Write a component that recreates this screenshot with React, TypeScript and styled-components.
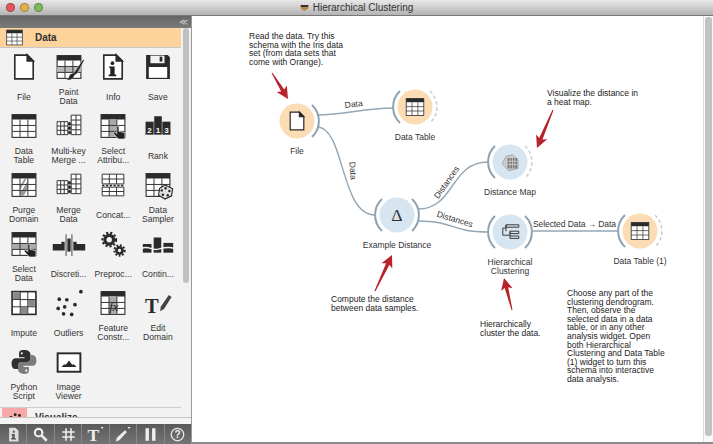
import React from "react";
import styled, { createGlobalStyle } from "styled-components";

const GlobalStyle = createGlobalStyle`
  html, body { margin: 0; padding: 0; background: #fff; }
  body { font-family: "Liberation Sans", Arial, sans-serif; color: #222; }
`;

// icons, all drawn on a 24x24 box
const Doc = () => (
  <g fill="#fff" stroke="#2a2a2a" strokeWidth="1.5">
    <path d="M3.5 1h11.500l5.500 5.500V23h-17z" />
    <path d="M15 1v5.500h5.500z" fill="#2a2a2a" />
  </g>
);

const Table = ({ children }: { children?: React.ReactNode }) => (
  <g>
    <rect x="1" y="1.5" width="22" height="21" fill="#fff" stroke="#2a2a2a" />
    <rect x="1" y="1.5" width="22" height="4.5" fill="#2a2a2a" />
    {children}
    <path d="M1 11.500h22M1 17h22M8.300 6v16M15.600 6v16" stroke="#333" strokeWidth="0.9" fill="none" />
  </g>
);

const Hand = ({ x = 14, y = 12 }: { x?: number; y?: number }) => (
  <path
    transform={`translate(${x} ${y})`}
    d="M1.500 0h2v5l5.500 1v6H3L-2 6.500l1.500-1L1.500 7z"
    fill="#222"
    stroke="#f2f2f2"
    strokeWidth="0.6"
  />
);

const icons: Record<string, React.ReactNode> = {
  file: <Doc />,
  paint: (
    <>
      <Table>
        <rect x="1" y="11.500" width="22" height="5.500" fill="#b9b9b9" />
      </Table>
      <path d="M25 5l1 1-6.500 12-2.500 1.500C16 23 13 24.500 9.500 24c2.500-1 2-3.500 4-5.500l3-1z" fill="#222" stroke="#f2f2f2" strokeWidth="0.4" />
    </>
  ),
  info: (
    <>
      <Doc />
      <circle cx="11.500" cy="8.500" r="1.700" fill="#222" />
      <path d="M8.500 11.500h5v7.500h1.500v1.500H8V19h1.500v-6h-1z" fill="#222" />
    </>
  ),
  save: (
    <>
      <path d="M1 1h20l2 2v20H1z" fill="#2a2a2a" />
      <rect x="5" y="1.500" width="13" height="7" fill="#f2f2f2" />
      <rect x="13.500" y="2.500" width="2.500" height="4.500" fill="#2a2a2a" />
      <rect x="3.500" y="12" width="17" height="10" fill="#fff" />
    </>
  ),
  table: <Table />,
  merge: (
    <g fill="#fff" stroke="#333" strokeWidth="0.9">
      <path d="M1 8h10v12H1zM1 12h10M1 16h10M4.300 8v12M7.600 8v12" />
      <path d="M14 2h9v18h-9zM14 6.500h9M14 11h9M14 15.500h9M18.500 2v18" />
      <circle cx="12.500" cy="10" r="1.200" fill="#222" />
      <circle cx="12.500" cy="14" r="1.200" fill="#222" />
      <circle cx="12.500" cy="18" r="1.200" fill="#222" />
    </g>
  ),
  select: (
    <>
      <Table>
        <rect x="8.300" y="6" width="7.300" height="16" fill="#aaa" />
      </Table>
      <Hand />
    </>
  ),
  rank: (
    <g transform="translate(0 -3)">
      <rect x="0.500" y="11" width="7.500" height="12" fill="#2a2a2a" />
      <rect x="8.500" y="6" width="7" height="17" fill="#2a2a2a" />
      <rect x="16" y="11" width="7.500" height="12" fill="#2a2a2a" />
      <text x="4.200" y="21" fontSize="7.500" fontWeight="700" fill="#fff" textAnchor="middle">2</text>
      <text x="12" y="21" fontSize="7.500" fontWeight="700" fill="#fff" textAnchor="middle">1</text>
      <text x="19.800" y="21" fontSize="7.500" fontWeight="700" fill="#fff" textAnchor="middle">3</text>
    </g>
  ),
  purge: (
    <Table>
      <path d="M8.300 22h3.500l3.800-7V6h-3L8.300 13z" fill="#999" />
      <path d="M9 17l6-10" stroke="#fff" strokeWidth="1.800" />
    </Table>
  ),
  concat: (
    <g fill="#fff" stroke="#333" strokeWidth="0.9">
      <path d="M2 2h20v9H2zM2 6.500h20M8.600 2v9M15.300 2v9" />
      <path d="M2 14h20v8H2zM2 18h20M8.600 14v8M15.300 14v8" />
      <path d="M2 12.500h20" stroke="#222" strokeWidth="1.500" strokeDasharray="2 1.500" />
    </g>
  ),
  sampler: (
    <>
      <Table />
      <path d="M18.500 12l7 3.500-1 6.500-6 3-6-3.500 1-6.500z" fill="#e2e2e2" stroke="#222" />
      <circle cx="15.500" cy="17" r="1.100" fill="#222" />
      <circle cx="19" cy="15" r="1.100" fill="#222" />
      <circle cx="22.500" cy="17.500" r="1.100" fill="#222" />
      <circle cx="16.500" cy="21" r="1.100" fill="#222" />
      <circle cx="21" cy="21.500" r="1.100" fill="#222" />
    </>
  ),
  selectData: (
    <>
      <Table>
        <rect x="1" y="11.500" width="22" height="5.500" fill="#aaa" />
      </Table>
      <Hand />
    </>
  ),
  discrete: (
    <g fill="#2a2a2a">
      <path d="M-3 12h8v-2h3v8H-3zM27 12h-8v-2h-3v8h11z" />
      <rect x="10.500" y="7" width="3" height="12" />
      <path d="M9.300 3v20M14.700 3v20" stroke="#2a2a2a" strokeWidth="0.8" />
    </g>
  ),
  gears: (
    <g fill="none" stroke="#2a2a2a">
      <circle cx="8.500" cy="8" r="4" strokeWidth="3" />
      <circle cx="8.500" cy="8" r="6.300" strokeWidth="2" strokeDasharray="2 1.800" />
      <circle cx="18" cy="18" r="2.800" strokeWidth="2.500" />
      <circle cx="18" cy="18" r="4.800" strokeWidth="1.800" strokeDasharray="1.700 1.500" />
    </g>
  ),
  continuize: (
    <g>
      <rect x="-2" y="12" width="8" height="8" fill="#2a2a2a" />
      <rect x="8" y="6" width="7" height="14" fill="#2a2a2a" />
      <rect x="17" y="11" width="9" height="9" fill="#2a2a2a" />
      <path d="M-3 16c6-3 9 2 14 1s9-3 16-1" stroke="#f2f2f2" strokeWidth="1.300" fill="none" />
    </g>
  ),
  impute: (
    <g>
      <rect x="1" y="1.500" width="22" height="21" fill="#fff" stroke="#2a2a2a" strokeWidth="1.500" />
      <rect x="2" y="2.500" width="6.500" height="6" fill="#888" />
      <rect x="16" y="9" width="6" height="6" fill="#888" />
      <rect x="9" y="16" width="6" height="6" fill="#888" />
      <path d="M1 8.800h22M1 15.500h22M8.500 1.500v21M15.500 1.500v21" stroke="#333" strokeWidth="0.9" />
    </g>
  ),
  outliers: (
    <g fill="#2a2a2a">
      {[[23, 1.5], [3, 8.5], [10, 9], [17.5, 13.5], [8, 15.5], [2, 17], [7, 22], [14.5, 22.5]].map(([cx, cy]) => (
        <circle key={`${cx}-${cy}`} cx={cx} cy={cy} r="1.700" />
      ))}
    </g>
  ),
  feature: (
    <Table>
      <rect x="8.300" y="6" width="7.300" height="16" fill="#aaa" />
      <text x="8.500" y="19" fontSize="12" fontStyle="italic" fontFamily="Liberation Serif" fill="#222">fx</text>
    </Table>
  ),
  edit: (
    <g>
      <text x="0" y="21" fontSize="19" fontWeight="700" fontFamily="Liberation Serif" fill="#2a2a2a">T</text>
      <path d="M22 4.500l2.500 2-7 11-3.500 2 .5-4z" fill="#444" />
    </g>
  ),
  python: (
    <g>
      <path d="M12 1C7 1 7.500 3 7.500 5.500V7.500h5v1H4.500C2 8.500 .5 10.500 .5 13.500s1.500 5 3.500 5H6.500v-3c0-2 1.500-3.500 3.500-3.500h5c1.700 0 3-1.300 3-3V5c0-2-2-4-6-4z" fill="#2f2f2f" />
      <circle cx="10" cy="4" r="1" fill="#f2f2f2" />
      <path d="M12 23c5 0 4.500-2 4.500-4.500V16.500h-5v-1h8c2.500 0 4-2 4-5s-1.500-5-3.500-5H18v3c0 2-1.500 3.500-3.500 3.500h-5c-1.700 0-3 1.300-3 3V19c0 2 2 4 5.500 4z" fill="#7c7c7c" />
      <circle cx="14" cy="20" r="1" fill="#f2f2f2" />
    </g>
  ),
  image: (
    <g>
      <rect x="1.500" y="4" width="21" height="17" fill="#fff" stroke="#2a2a2a" strokeWidth="1.800" />
      <path d="M5 16.500l2.500-2.500 1.500.5 3-4 3 4 1.500-.5 2.500 2.500z" fill="#2a2a2a" />
    </g>
  ),
};

const widgets: [string, string[]][] = [
  ["file", ["File"]],
  ["paint", ["Paint", "Data"]],
  ["info", ["Info"]],
  ["save", ["Save"]],
  ["table", ["Data", "Table"]],
  ["merge", ["Multi-key", "Merge ..."]],
  ["select", ["Select", "Attribu..."]],
  ["rank", ["Rank"]],
  ["purge", ["Purge", "Domain"]],
  ["merge", ["Merge", "Data"]],
  ["concat", ["Concat..."]],
  ["sampler", ["Data", "Sampler"]],
  ["selectData", ["Select", "Data"]],
  ["discrete", ["Discreti..."]],
  ["gears", ["Preproc..."]],
  ["continuize", ["Contin..."]],
  ["impute", ["Impute"]],
  ["outliers", ["Outliers"]],
  ["feature", ["Feature", "Constr..."]],
  ["edit", ["Edit", "Domain"]],
  ["python", ["Python", "Script"]],
  ["image", ["Image", "Viewer"]],
];

const Window = styled.div`
  width: 713px;
  height: 444px;
  overflow: hidden;
  display: flex;
  flex-direction: column;
  background: #fff;
`;

const TitleBar = styled.div`
  height: 15px;
  flex: none;
  position: relative;
  display: flex;
  align-items: center;
  justify-content: center;
  gap: 4px;
  background: linear-gradient(#e8e8e8, #b4b4b4);
  border-bottom: 1px solid #777;
  font-size: 10px;
  color: #333;
`;

const Lights = styled.div`
  position: absolute;
  left: 6px;
  top: 3px;
  display: flex;
  gap: 5px;
`;

const Light = styled.span<{ $color: string }>`
  width: 9px;
  height: 9px;
  border-radius: 50%;
  background: ${(p) => p.$color};
  box-shadow: inset 0 0 0 1px rgba(0, 0, 0, 0.25);
`;

const Body = styled.div`
  flex: 1;
  min-height: 0;
  display: flex;
`;

const Dock = styled.div`
  width: 191px;
  flex: none;
  display: flex;
  flex-direction: column;
  background: #f2f2f2;
  border-right: 1px solid #999;
`;

const DockHeader = styled.div`
  height: 12px;
  flex: none;
  display: flex;
  align-items: center;
  justify-content: flex-end;
  padding-right: 3px;
  background: linear-gradient(#666, #7a7a7a);
  color: #ccc;
  font-size: 9px;
  line-height: 1;
`;

const ToolBox = styled.div`
  flex: 1;
  min-height: 0;
  display: flex;
  overflow: hidden;
`;

const Categories = styled.div`
  width: 181px;
  flex: none;
  overflow: hidden;
`;

const Category = styled.div<{ $bg: string }>`
  height: 20px;
  box-sizing: border-box;
  display: flex;
  align-items: center;
  padding-left: 2px;
  background: ${(p) => p.$bg};
  border-bottom: 1px solid #c8c8c8;
  font-size: 10px;
  font-weight: 700;
  color: #333;
`;

const CategoryTile = styled.div<{ $bg: string }>`
  width: 25px;
  height: 100%;
  margin-right: 8px;
  display: flex;
  align-items: center;
  justify-content: center;
  background: ${(p) => p.$bg};
`;

const CategoryIcon = styled.svg`
  width: 17px;
  height: 17px;
`;

const Grid = styled.div`
  display: grid;
  grid-template-columns: repeat(4, 44.7px);
  grid-auto-rows: 59px;
  height: 360px;
  padding: 6px 0 0 1.5px;
  box-sizing: border-box;
  border-bottom: 1px solid #ccc;
`;

const Widget = styled.div`
  display: flex;
  flex-direction: column;
  align-items: center;
`;

const WidgetIcon = styled.svg`
  width: 26px;
  height: 26px;
  flex: none;
  overflow: visible;
`;

const WidgetLabel = styled.div`
  height: 24px;
  margin-top: 5px;
  display: flex;
  flex-direction: column;
  justify-content: center;
  align-items: center;
  font-size: 8.6px;
  line-height: 9px;
  color: #333;
  white-space: nowrap;
`;

const ScrollTrack = styled.div`
  width: 10px;
  flex: none;
  padding-left: 2px;
  box-sizing: border-box;
`;

const ScrollThumb = styled.div`
  width: 6px;
  height: 255px;
  border-radius: 3px;
  background: #c0c0c0;
`;

const Band = styled.div`
  height: 6px;
  flex: none;
  background: #f4f4f4;
  border-top: 1px solid #c4c4c4;
`;

const ToolBar = styled.div`
  height: 20px;
  flex: none;
  display: flex;
  background: linear-gradient(#5a5a5a, #747474);
`;

const Tool = styled.div`
  flex: 1;
  display: flex;
  align-items: center;
  justify-content: center;
  border-right: 1px solid #888;
  &:last-child { border-right: none; }
`;

const ToolIcon = styled.svg`
  width: 15px;
  height: 15px;
  overflow: visible;
`;

const Canvas = styled.div`
  flex: 1;
  min-width: 0;
  position: relative;
  background: #fff;
  border-bottom: 2px solid #8a8a8a;
`;

const EdgeLayer = styled.svg`
  position: absolute;
  left: 0;
  top: 0;
`;

const Node = styled.div<{ $x: number; $y: number }>`
  position: absolute;
  left: ${(p) => p.$x}px;
  top: ${(p) => p.$y}px;
  width: 0;
  height: 0;
`;

const NodeShape = styled.svg`
  position: absolute;
  left: -35px;
  top: -35px;
`;

const NodeLabel = styled.div`
  position: absolute;
  top: 26px;
  left: -60px;
  width: 120px;
  text-align: center;
  font-size: 8.5px;
  line-height: 9px;
  color: #333;
`;

const Note = styled.div<{ $x: number; $y: number }>`
  position: absolute;
  left: ${(p) => p.$x}px;
  top: ${(p) => p.$y}px;
  font-size: 8.5px;
  line-height: 8.6px;
  color: #222;
  white-space: pre;
`;

const RightScroll = styled.div`
  position: absolute;
  right: 0;
  top: 0;
  bottom: 0;
  width: 10px;
  padding: 1px 0 6px;
  box-sizing: border-box;
  background: #f8f8f8;
  border-left: 1px solid #ddd;
`;

const RightThumb = styled.div`
  width: 7px;
  height: 100%;
  margin-left: 1px;
  border-radius: 3px;
  background: #c2c2c2;
`;

// canvas positions are taken from the window minus the title bar and dock
const nodes = [
  { x: 105, y: 105, fill: "#fbdcb4", label: "File", out: true, icon: "file" },
  { x: 223, y: 91, fill: "#fbdcb4", label: "Data Table", inp: true, dash: true, icon: "table" },
  { x: 205, y: 199, fill: "#d7e5f0", label: "Example Distance", out: true, inp: true, icon: "delta" },
  { x: 318, y: 146, fill: "#d7e5f0", label: "Distance Map", inp: true, dash: true, icon: "map" },
  { x: 318, y: 216, fill: "#d7e5f0", label: "Hierarchical\nClustering", out: true, inp: true, icon: "tree" },
  { x: 448, y: 215, fill: "#fbdcb4", label: "Data Table (1)", inp: true, dash: true, icon: "table" },
];

const nodeIcon = (name: string) => {
  if (name === "delta") {
    return <text x="12" y="20" fontSize="22" fontFamily="Liberation Serif" textAnchor="middle" fill="#333">Δ</text>;
  }
  if (name === "map") {
    return (
      <g>
        <path d="M2 14l5-9 8-2 7 6v11l-12 3z" fill="#ccc" stroke="#888" strokeWidth="0.7" />
        <rect x="9" y="7" width="12" height="13" fill="#777" />
        <path d="M12 7v13M15 7v13M18 7v13M9 11h12M9 15h12" stroke="#ddd" strokeWidth="0.9" />
      </g>
    );
  }
  if (name === "tree") {
    return (
      <path
        d="M7 3h16v3H7zM7 3v8M3 7h4M3 7v9M3 16h9M12 11h11v3H12zM12 11v9h11v-3H12"
        stroke="#333"
        strokeWidth="1.2"
        fill="none"
      />
    );
  }
  return icons[name];
};

// arcs either side of a node
const Arc = ({ side, dash }: { side: 1 | -1; dash?: boolean }) => (
  <path
    d={`M${side * 15} -16 A22 22 0 0 ${side === 1 ? 1 : 0} ${side * 15} 16`}
    fill="none"
    stroke={dash ? "#c6ccd2" : "#8fa2b1"}
    strokeWidth={dash ? 1.5 : 2}
    strokeDasharray={dash ? "3.5 2.5" : undefined}
  />
);

const links = [
  "M125 99C155 99 170 92 201 92",
  "M125 111C153 111 148 199 183 199",
  "M226 193C263 193 258 146 296 146",
  "M226 205C263 205 258 216 296 216",
  "M341 215H426",
];

// red call-out arrow from tail to tip, thin at the tail
const arrowPath = (x0: number, y0: number, x1: number, y1: number) => {
  const len = Math.hypot(x1 - x0, y1 - y0);
  const ux = (x1 - x0) / len;
  const uy = (y1 - y0) / len;
  const at = (along: number, across: number) =>
    `${(x0 + ux * along - uy * across).toFixed(1)} ${(y0 + uy * along + ux * across).toFixed(1)}`;
  const neck = len - 10;
  return `M${at(0, -0.5)}L${at(neck, -1.8)}L${at(neck - 2, -6)}L${at(len, 0)}L${at(neck - 2, 6)}L${at(neck, 1.8)}L${at(0, 0.5)}Z`;
};

const arrows = [
  [80, 57, 96, 83],
  [361, 94, 345, 132],
  [183, 275, 200, 239],
  [320, 294, 312, 262],
];

const edgeLabels = [
  { x: 162, y: 91, r: -7, t: "Data" },
  { x: 158, y: 155, r: 85, t: "Data" },
  { x: 257, y: 168, r: -55, t: "Distances" },
  { x: 262, y: 206, r: 17, t: "Distances" },
];

export default function App() {
  return (
    <Window>
      <GlobalStyle />
      <TitleBar>
        <Lights>
          <Light $color="#e0575a" />
          <Light $color="#e2b04a" />
          <Light $color="#7cbb5c" />
        </Lights>
        <svg width="9" height="7" viewBox="0 0 9 7">
          <path d="M0 1h9l-1 4-3.500 2L1 5z" fill="#b58a4a" />
          <rect x="1" y="1" width="7" height="2" fill="#333" />
        </svg>
        Hierarchical Clustering
      </TitleBar>
      <Body>
        <Dock>
          <DockHeader>≪</DockHeader>
          <ToolBox>
            <Categories>
              <Category $bg="#fdd29b">
                <CategoryTile $bg="#fdd29b">
                  <CategoryIcon viewBox="0 0 24 24"><Table /></CategoryIcon>
                </CategoryTile>
                Data
              </Category>
              <Grid>
                {widgets.map(([icon, lines]) => (
                  <Widget key={lines.join(" ")}>
                    <WidgetIcon viewBox="0 0 24 24">{icons[icon]}</WidgetIcon>
                    <WidgetLabel>
                      {lines.map((line) => (
                        <span key={line}>{line}</span>
                      ))}
                    </WidgetLabel>
                  </Widget>
                ))}
              </Grid>
              <Category $bg="#f2f2f2">
                <CategoryTile $bg="#f9a8a8">
                  <CategoryIcon viewBox="0 0 24 24">
                    <circle cx="7" cy="12" r="2" fill="#222" />
                    <circle cx="13" cy="8" r="2" fill="#222" />
                    <circle cx="19" cy="9" r="2" fill="#222" />
                    <circle cx="12" cy="15" r="2" fill="#222" />
                  </CategoryIcon>
                </CategoryTile>
                Visualize
              </Category>
            </Categories>
            <ScrollTrack>
              <ScrollThumb />
            </ScrollTrack>
          </ToolBox>
          <Band />
          <ToolBar>
            <Tool>
              <ToolIcon viewBox="0 0 24 24">
                <path d="M5 1h10l5 5v17H5z" fill="#ddd" />
                <path d="M11 6h3v3h-3zM9 11h5v7h2v2H8v-2h2v-5H9z" fill="#555" />
              </ToolIcon>
            </Tool>
            <Tool>
              <ToolIcon viewBox="0 0 24 24" fill="none" stroke="#eee">
                <circle cx="9" cy="9" r="6" strokeWidth="3.5" />
                <path d="M13.500 13.500L22 22" strokeWidth="4" />
              </ToolIcon>
            </Tool>
            <Tool>
              <ToolIcon viewBox="0 0 24 24" stroke="#eee" strokeWidth="2.5">
                <path d="M8 2v20M16 2v20M2 8h20M2 16h20" />
              </ToolIcon>
            </Tool>
            <Tool>
              <ToolIcon viewBox="0 0 24 24">
                <text x="-1" y="23" fontSize="28" fontWeight="700" fontFamily="Liberation Serif" fill="#eee">T</text>
                <path d="M20 0h5l-2.500 3z" fill="#eee" />
              </ToolIcon>
            </Tool>
            <Tool>
              <ToolIcon viewBox="0 0 24 24">
                <path d="M16 5l3 3L7 21l-6 2 2-6z" fill="#eee" />
                <path d="M20 0h5l-2.500 3z" fill="#eee" />
              </ToolIcon>
            </Tool>
            <Tool>
              <ToolIcon viewBox="0 0 24 24" fill="#eee">
                <rect x="4" y="2" width="5.5" height="20" />
                <rect x="14.500" y="2" width="5.5" height="20" />
              </ToolIcon>
            </Tool>
            <Tool>
              <ToolIcon viewBox="0 0 24 24" fill="none" stroke="#eee" strokeWidth="2">
                <circle cx="12" cy="12" r="10" />
                <text x="12" y="18" fontSize="16" fontWeight="700" textAnchor="middle" fill="#eee" stroke="none">?</text>
              </ToolIcon>
            </Tool>
          </ToolBar>
        </Dock>
        <Canvas>
          <EdgeLayer width="521" height="428" viewBox="0 0 521 428">
            {links.map((d) => (
              <path key={d} d={d} fill="none" stroke="#93a6b4" strokeWidth="1.4" />
            ))}
            {edgeLabels.map((l) => (
              <text
                key={`${l.x}-${l.y}`}
                x={l.x}
                y={l.y}
                fontSize="8.5"
                fill="#333"
                textAnchor="middle"
                transform={`rotate(${l.r} ${l.x} ${l.y})`}
              >
                {l.t}
              </text>
            ))}
            <text x="341" y="211" fontSize="8.5" fill="#333" textLength="83">Selected Data → Data</text>
            {arrows.map(([x0, y0, x1, y1]) => (
              <path key={`${x0}-${y0}`} d={arrowPath(x0, y0, x1, y1)} fill="#b8222c" />
            ))}
          </EdgeLayer>
          {nodes.map((n) => (
            <Node key={n.label} $x={n.x} $y={n.y}>
              <NodeShape width="70" height="70" viewBox="-35 -35 70 70">
                <circle r="17.5" fill={n.fill} />
                {n.inp && <Arc side={-1} />}
                {n.out && <Arc side={1} />}
                {n.dash && <Arc side={1} dash />}
                <g transform="translate(-9.6 -9.6) scale(.8)">{nodeIcon(n.icon)}</g>
              </NodeShape>
              <NodeLabel>
                {n.label.split("\n").map((line) => (
                  <div key={line}>{line}</div>
                ))}
              </NodeLabel>
            </Node>
          ))}
          <Note $x={57} $y={16}>{"Read the data. Try this\nschema with the Iris data\nset (from data sets that\ncome with Orange)."}</Note>
          <Note $x={355} $y={73}>{"Visualize the distance in\na heat map."}</Note>
          <Note $x={139} $y={279}>{"Compute the distance\nbetween data samples."}</Note>
          <Note $x={288} $y={304}>{"Hierarchically\ncluster the data."}</Note>
          <Note $x={375} $y={273}>{"Choose any part of the\nclustering dendrogram.\nThen, observe the\nselected data in a data\ntable, or in any other\nanalysis widget. Open\nboth Hierarchical\nClustering and Data Table\n(1) widget to turn this\nschema into interactive\ndata analysis."}</Note>
          <RightScroll>
            <RightThumb />
          </RightScroll>
        </Canvas>
      </Body>
    </Window>
  );
}
